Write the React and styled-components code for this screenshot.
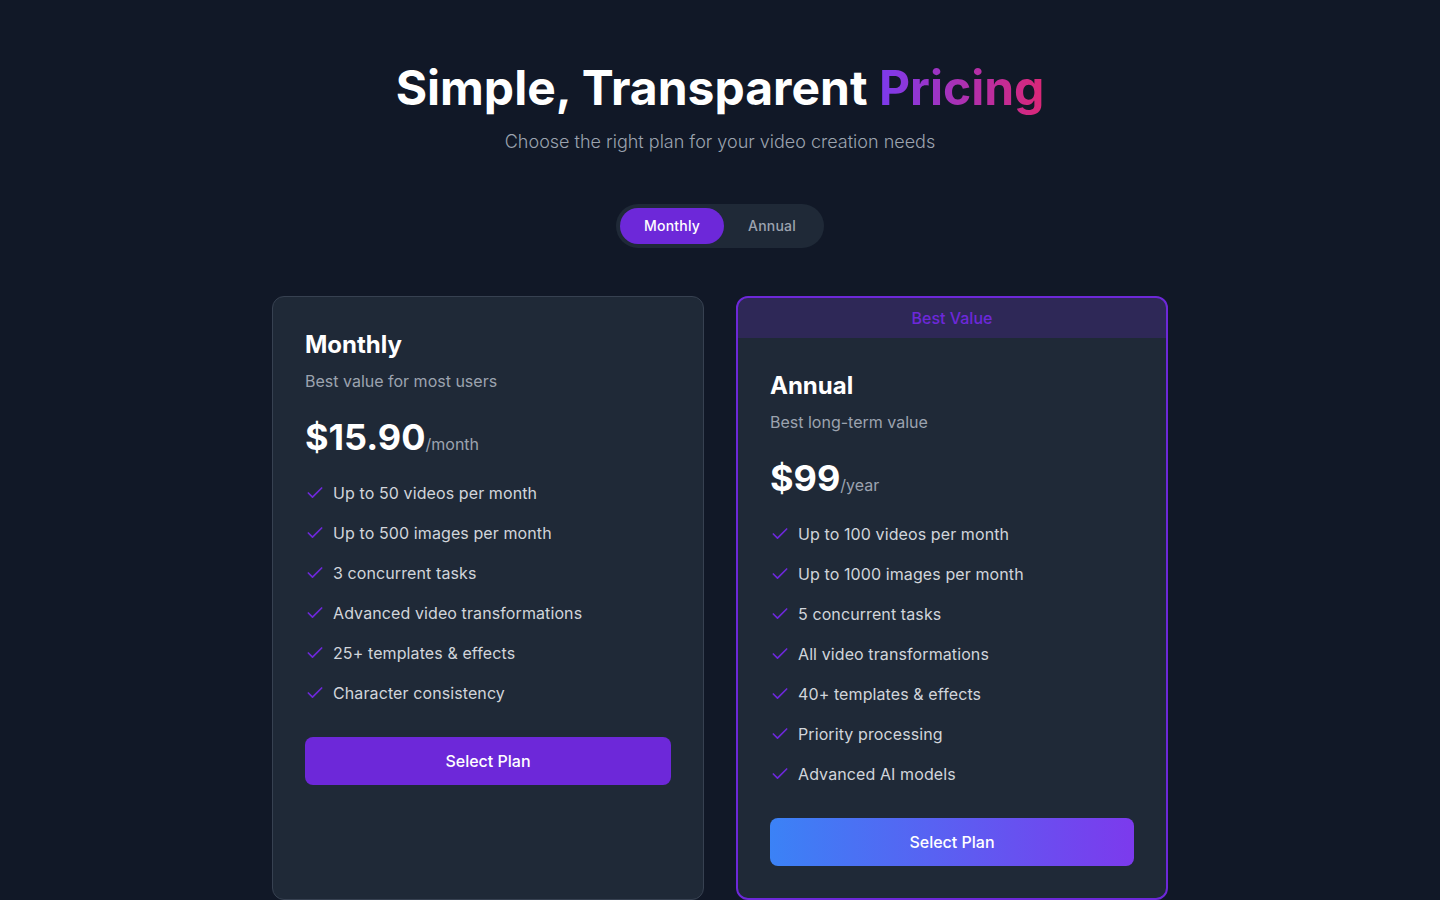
import React, { useState } from 'react';
import styled, { createGlobalStyle } from 'styled-components';

const GlobalStyle = createGlobalStyle`
  * { box-sizing: border-box; }
  body {
    margin: 0;
    background: #111827;
    font-family: Inter, "Noto Sans", "Liberation Sans", sans-serif;
    -webkit-font-smoothing: antialiased;
  }
`;

const Page = styled.div`
  min-height: 100vh;
  background: #111827;
  padding: 64px 16px;
`;

const Header = styled.div`
  text-align: center;
`;

const Title = styled.h1`
  margin: 0;
  font-size: 48px;
  line-height: 48px;
  font-weight: 700;
  color: #ffffff;
`;

const Gradient = styled.span`
  background: linear-gradient(to right, #7c3aed, #db2777);
  -webkit-background-clip: text;
  background-clip: text;
  color: transparent;
`;

const Subtitle = styled.p`
  margin: 16px 0 0;
  font-size: 18px;
  line-height: 28px;
  font-weight: 300;
  color: #9ca3af;
`;

const ToggleWrap = styled.div`
  display: flex;
  justify-content: center;
  margin: 48px 0;
`;

const Toggle = styled.div`
  display: flex;
  padding: 4px;
  background: #1f2937;
  border-radius: 9999px;
`;

const ToggleButton = styled.button`
  border: none;
  padding: 8px 24px;
  border-radius: 9999px;
  font-family: inherit;
  font-size: 14px;
  line-height: 20px;
  font-weight: 500;
  letter-spacing: 0.2px;
  cursor: pointer;
  background: ${p => (p.$active ? '#6d28d9' : 'transparent')};
  color: ${p => (p.$active ? '#ffffff' : '#9ca3af')};
`;

const Grid = styled.div`
  max-width: 896px;
  margin: 0 auto;
  display: grid;
  grid-template-columns: 1fr 1fr;
  gap: 32px;
`;

const Card = styled.div`
  background: #1f2937;
  border-radius: 12px;
  overflow: hidden;
  border: ${p => (p.$featured ? '2px solid #6d28d9' : '1px solid #374151')};
`;

const Badge = styled.div`
  background: rgba(109, 40, 217, 0.2);
  color: #6d28d9;
  text-align: center;
  font-size: 16px;
  line-height: 24px;
  font-weight: 500;
  padding: 8px 0;
`;

const Body = styled.div`
  padding: 32px;
`;

const PlanName = styled.h3`
  margin: 0 0 8px;
  font-size: 24px;
  line-height: 32px;
  font-weight: 700;
  color: #ffffff;
`;

const PlanDesc = styled.p`
  margin: 0 0 24px;
  font-size: 16px;
  line-height: 24px;
  color: #9ca3af;
`;

const PriceRow = styled.div`
  display: flex;
  align-items: baseline;
  margin-bottom: 24px;
`;

const Price = styled.span`
  font-size: 36px;
  line-height: 40px;
  font-weight: 700;
  color: #ffffff;
`;

const Period = styled.span`
  font-size: 16px;
  line-height: 24px;
  color: #9ca3af;
`;

const Features = styled.ul`
  list-style: none;
  margin: 0 0 32px;
  padding: 0;
  display: flex;
  flex-direction: column;
  gap: 16px;
`;

const Feature = styled.li`
  display: flex;
  align-items: center;
  font-size: 16px;
  line-height: 24px;
  color: #d1d5db;
  letter-spacing: 0.1px;
`;

const CheckIcon = styled.svg`
  width: 20px;
  height: 20px;
  margin-right: 8px;
  flex-shrink: 0;
  color: #6d28d9;
`;

const SelectButton = styled.button`
  width: 100%;
  border: none;
  border-radius: 8px;
  padding: 12px 0;
  font-family: inherit;
  font-size: 16px;
  line-height: 24px;
  font-weight: 500;
  color: #ffffff;
  cursor: pointer;
  background: ${p => (p.$gradient ? 'linear-gradient(to right, #3b82f6, #7c3aed)' : '#6d28d9')};
`;

const Check = () => (
  <CheckIcon viewBox="0 0 24 24" fill="none" stroke="currentColor" strokeWidth="2" strokeLinecap="round" strokeLinejoin="round">
    <path d="M20 6 9 17l-5-5" />
  </CheckIcon>
);

const plans = [
  {
    name: 'Monthly',
    desc: 'Best value for most users',
    price: '$15.90',
    period: '/month',
    features: [
      'Up to 50 videos per month',
      'Up to 500 images per month',
      '3 concurrent tasks',
      'Advanced video transformations',
      '25+ templates & effects',
      'Character consistency',
    ],
  },
  {
    name: 'Annual',
    desc: 'Best long-term value',
    price: '$99',
    period: '/year',
    featured: true,
    features: [
      'Up to 100 videos per month',
      'Up to 1000 images per month',
      '5 concurrent tasks',
      'All video transformations',
      '40+ templates & effects',
      'Priority processing',
      'Advanced AI models',
    ],
  },
];

export default function App() {
  const [billing, setBilling] = useState('monthly');

  return (
    <Page>
      <GlobalStyle />
      <Header>
        <Title>
          Simple, Transparent <Gradient>Pricing</Gradient>
        </Title>
        <Subtitle>Choose the right plan for your video creation needs</Subtitle>
      </Header>

      <ToggleWrap>
        <Toggle>
          <ToggleButton $active={billing === 'monthly'} onClick={() => setBilling('monthly')}>
            Monthly
          </ToggleButton>
          <ToggleButton $active={billing === 'annual'} onClick={() => setBilling('annual')}>
            Annual
          </ToggleButton>
        </Toggle>
      </ToggleWrap>

      <Grid>
        {plans.map(plan => (
          <Card key={plan.name} $featured={plan.featured}>
            {plan.featured && <Badge>Best Value</Badge>}
            <Body>
              <PlanName>{plan.name}</PlanName>
              <PlanDesc>{plan.desc}</PlanDesc>
              <PriceRow>
                <Price>{plan.price}</Price>
                <Period>{plan.period}</Period>
              </PriceRow>
              <Features>
                {plan.features.map(f => (
                  <Feature key={f}>
                    <Check />
                    {f}
                  </Feature>
                ))}
              </Features>
              <SelectButton $gradient={plan.featured}>Select Plan</SelectButton>
            </Body>
          </Card>
        ))}
      </Grid>
    </Page>
  );
}
